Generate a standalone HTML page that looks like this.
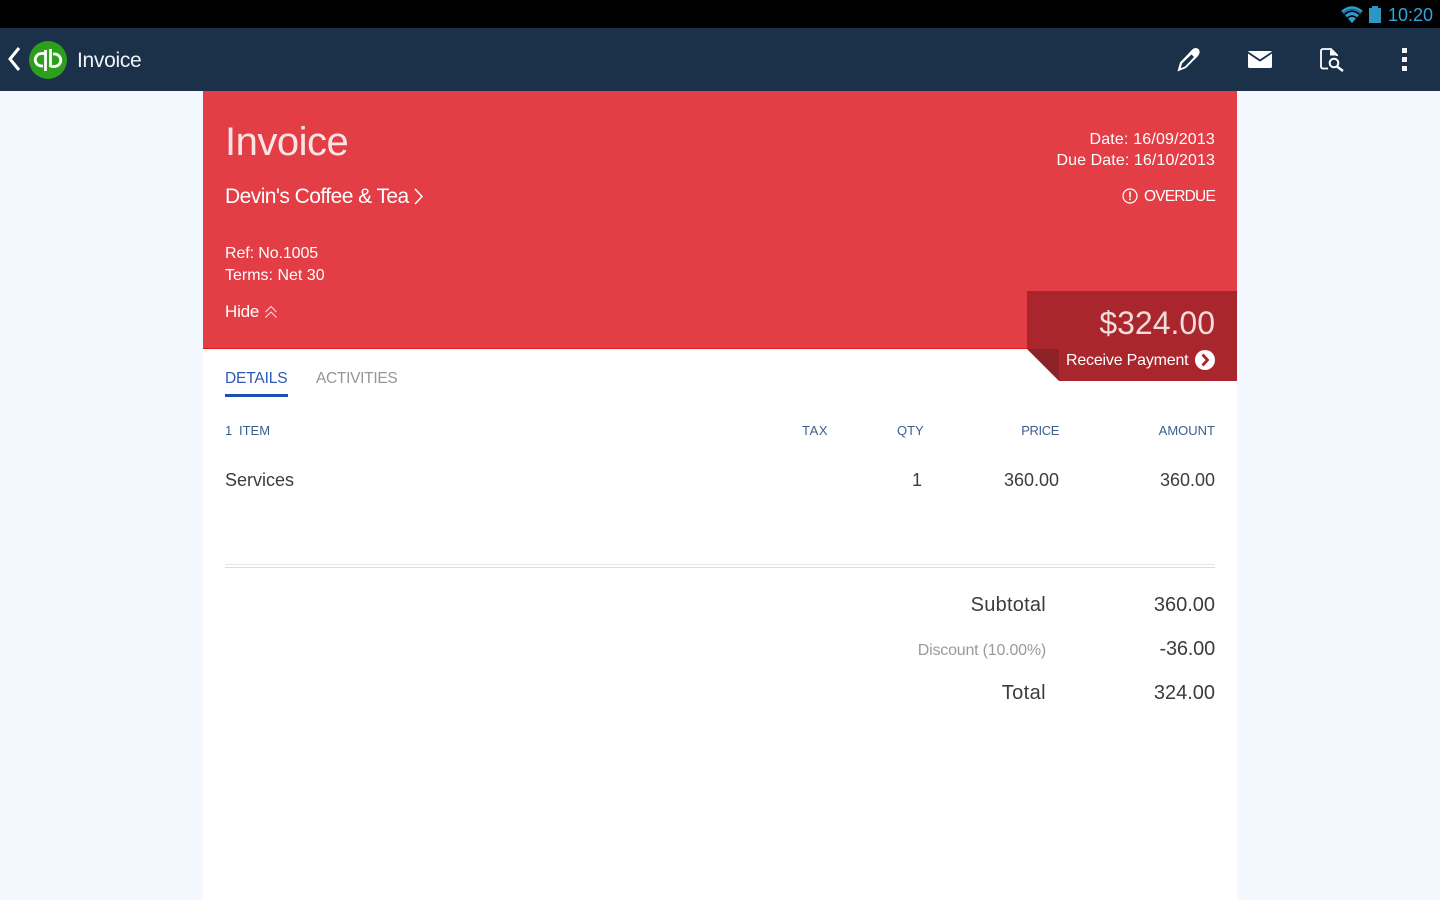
<!DOCTYPE html>
<html><head><meta charset="utf-8">
<style>
html,body{margin:0;padding:0;width:1440px;height:900px;overflow:hidden;background:#f3f8ff;font-family:"Liberation Sans",sans-serif}
.t{position:absolute;white-space:nowrap;line-height:1}
.r{text-align:right}
svg{position:absolute;overflow:visible}
.w{color:#fff}
.b{color:#3b5f8c;font-size:13px}
.d{color:#3c3c3c}
</style></head><body>
<div style="position:absolute;left:0;top:0;width:1440px;height:28px;background:#000"></div>
<div style="position:absolute;left:0;top:28px;width:1440px;height:63px;background:#1b3049"></div>
<div style="position:absolute;left:203px;top:91px;width:1034px;height:809px;background:#fff"></div>
<div style="position:absolute;left:203px;top:91px;width:1034px;height:258px;background:#e33d45;border-bottom:1px solid #ee0f1a;box-sizing:border-box"></div>

<!-- status bar -->
<svg style="left:1341px;top:6px" width="22" height="17" viewBox="0 0 22 17"><path d="M11 17L0 5Q11-4 22 5Z" fill="#1b6f96"/><path d="M11 17L3 8Q11 1 19 8Z" fill="#000"/><path d="M11 17L4 9Q11 3 18 9Z" fill="#2f9ccb"/><path d="M11 17L6 11.500Q11 7 16 11.500Z" fill="#000"/><path d="M11 17L7 12.500Q11 9 15 12.500Z" fill="#2f9ccb"/><path d="M0.500 4.500Q11-4 21.500 4.500L20 6Q11-1 2 6Z" fill="#2f9ccb"/></svg>
<div style="position:absolute;left:1369px;top:8px;width:12px;height:15px;background:#2f95c2"></div>
<div style="position:absolute;left:1372px;top:6px;width:6px;height:2px;background:#2f95c2"></div>
<div class="t" style="right:7px;top:6px;font-size:18px;color:#30a6dc">10:20</div>

<!-- action bar -->
<svg style="left:6px;top:46px" width="16" height="26" viewBox="0 0 16 26"><path d="M13 2L4 13L13 24" fill="none" stroke="#fff" stroke-width="3"/></svg>
<svg style="left:29px;top:41px" width="38" height="38" viewBox="0 0 38 38"><circle cx="19" cy="19" r="19" fill="#2ca01c"/><g fill="none" stroke="#fff" stroke-width="2.800"><path d="M16.500 12.500H12.500A6 6 0 0 0 12.500 25H14"/><path d="M16.500 9V30"/><path d="M21.500 25.500H25.500A6 6 0 0 0 25.500 13H24"/><path d="M21.500 8V26"/></g></svg>
<div class="t" style="left:77px;top:50px;font-size:21px;color:#f0f2f4;letter-spacing:-.3px">Invoice</div>

<svg style="left:1176px;top:47px" width="24" height="25" viewBox="0 0 24 25"><path d="M1.500 24.500L4 15.500L15.800 3Q19-.5 22.500 2Q25 5 22 9L10 21Z" fill="#fff"/><path d="M4.700 21.300L6 16.500L15.500 7.500L18 10L9 19.500Z" fill="#1b3049"/></svg>
<svg style="left:1248px;top:51px" width="24" height="17" viewBox="0 0 24 17"><rect width="24" height="17" rx="1.500" fill="#fff"/><path d="M0 1.500L12 9.500L24 1.500" fill="none" stroke="#1b3049" stroke-width="1.800"/></svg>
<svg style="left:1320px;top:48px" width="24" height="24" viewBox="0 0 24 24"><path d="M8 20.500H3Q1 20.500 1 18.500V3Q1 1 3 1H11L17 7V8" fill="none" stroke="#fff" stroke-width="1.800"/><path d="M10 1.500V7.500H16.500Z" fill="#fff"/><circle cx="14" cy="15" r="4.300" fill="none" stroke="#fff" stroke-width="2"/><path d="M17 18.500L23 23" stroke="#fff" stroke-width="2.400"/></svg>
<div style="position:absolute;left:1402px;top:48px;width:5px;height:5px;background:#f2f4f6"></div>
<div style="position:absolute;left:1402px;top:57px;width:5px;height:5px;background:#f2f4f6"></div>
<div style="position:absolute;left:1402px;top:66px;width:5px;height:5px;background:#f2f4f6"></div>

<!-- header -->
<div class="t" style="left:225px;top:122px;font-size:40px;letter-spacing:-.5px;color:#fbe4e5">Invoice</div>
<div class="t w" style="left:225px;top:186px;font-size:21px;letter-spacing:-.55px">Devin's Coffee &amp; Tea</div>
<svg style="left:412px;top:187px" width="12" height="19" viewBox="0 0 12 19"><path d="M3 2L10 9.500L3 17" fill="none" stroke="#fff" stroke-width="1.500"/></svg>
<div class="t w" style="left:225px;top:246px;font-size:16px;letter-spacing:-.1px">Ref: No.1005</div>
<div class="t w" style="left:225px;top:268px;font-size:16px">Terms: Net 30</div>
<div class="t w" style="left:225px;top:303px;font-size:17px;letter-spacing:-.2px">Hide</div>
<svg style="left:264px;top:305px" width="14" height="14" viewBox="0 0 14 14" fill="none" stroke="#fbdcdd" stroke-width="1.100"><path d="M1.500 7L7 1.500L12.500 7"/><path d="M1.500 12.500L7 7L12.500 12.500"/></svg>
<div class="t w r" style="right:225px;top:132px;font-size:16px;letter-spacing:.17px">Date: 16/09/2013</div>
<div class="t w r" style="right:225px;top:153px;font-size:16px;letter-spacing:.1px">Due Date: 16/10/2013</div>
<svg style="left:1122px;top:188px" width="16" height="16" viewBox="0 0 16 16"><circle cx="8" cy="8" r="7" fill="none" stroke="#fff" stroke-width="1.200"/><rect x="7.200" y="3.500" width="1.600" height="6" fill="#fff"/><rect x="7.200" y="10.500" width="1.600" height="1.700" fill="#fff"/></svg>
<div class="t w r" style="right:225px;top:189px;font-size:15.500px;letter-spacing:-.8px">OVERDUE</div>

<!-- ribbon -->
<svg style="left:1027px;top:291px" width="210" height="90" viewBox="0 0 210 90"><path d="M0 0H210V90H32V58H0Z" fill="#aa262d"/><path d="M0 58H32V90Z" fill="#8c2227"/></svg>
<div class="t r" style="right:225px;top:307px;font-size:32px;color:#f3dcde">$324.00</div>
<div class="t w" style="left:1066px;top:353px;font-size:16px;letter-spacing:-.2px">Receive Payment</div>
<svg style="left:1195px;top:350px" width="20" height="20" viewBox="0 0 20 20"><circle cx="10" cy="10" r="10" fill="#fff"/><path d="M7.500 4.500L12.500 10L7.500 15.500" fill="none" stroke="#aa262d" stroke-width="2.800"/></svg>

<!-- tabs -->
<div class="t" style="left:225px;top:371px;font-size:15.500px;letter-spacing:-.15px;color:#2a59b8">DETAILS</div>
<div style="position:absolute;left:225px;top:394px;width:63px;height:3px;background:#1d4fb4"></div>
<div class="t" style="left:316px;top:371px;font-size:15.500px;letter-spacing:-.3px;color:#969696">ACTIVITIES</div>

<!-- table -->
<div class="t b" style="left:225px;top:424px">1</div>
<div class="t b" style="left:239px;top:424px">ITEM</div>
<div class="t b" style="left:802px;top:424px;letter-spacing:.6px">TAX</div>
<div class="t b" style="left:897px;top:424px">QTY</div>
<div class="t b r" style="right:381px;top:424px;letter-spacing:-.4px">PRICE</div>
<div class="t b r" style="right:225px;top:424px">AMOUNT</div>

<div class="t d" style="left:225px;top:471px;font-size:18px">Services</div>
<div class="t d r" style="right:518px;top:471px;font-size:18px">1</div>
<div class="t d r" style="right:381px;top:471px;font-size:18px">360.00</div>
<div class="t d r" style="right:225px;top:471px;font-size:18px">360.00</div>

<div style="position:absolute;left:225px;top:564px;width:990px;height:1px;background:#e2e8ee"></div>
<div style="position:absolute;left:225px;top:567px;width:990px;height:1px;background:#cfe0ec"></div>

<div class="t d r" style="right:394px;top:595px;font-size:20px;letter-spacing:.25px">Subtotal</div>
<div class="t d r" style="right:225px;top:595px;font-size:20px">360.00</div>
<div class="t r" style="right:394px;top:643px;font-size:16px;letter-spacing:-.2px;color:#9a9a9a">Discount (10.00%)</div>
<div class="t d r" style="right:225px;top:639px;font-size:20px;letter-spacing:-.2px">-36.00</div>
<div class="t d r" style="right:394px;top:683px;font-size:20px;letter-spacing:.4px">Total</div>
<div class="t d r" style="right:225px;top:683px;font-size:20px">324.00</div>
</body></html>
